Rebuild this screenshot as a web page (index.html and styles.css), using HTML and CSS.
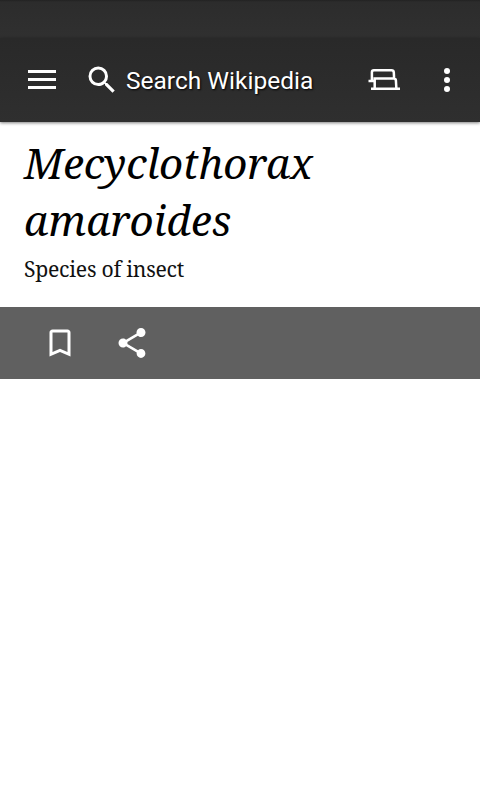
FILE: index.html
```html
<!DOCTYPE html>
<html lang="en">
<head>
<meta charset="utf-8">
<title>Mecyclothorax amaroides</title>
<link rel="stylesheet" href="styles.css">
</head>
<body>
<div class="status"></div>
<header class="toolbar">
<svg class="menu" width="28" height="20" viewBox="0 0 28 20"><path d="M0 1.5h28M0 9.500h28M0 17.500h28" stroke="#fff" stroke-width="3"/></svg>
<svg class="search" width="36" height="36" viewBox="0 0 24 24"><path fill="#fff" d="M15.5 14h-.79l-.28-.27A6.47 6.47 0 0 0 16 9.5 6.5 6.5 0 1 0 9.5 16c1.61 0 3.09-.59 4.23-1.57l.27.28v.79l5 4.99L20.49 19l-4.99-5zm-6 0C7.01 14 5 11.99 5 9.5S7.01 5 9.5 5 14 7.01 14 9.5 11.99 14 9.5 14z"/></svg>
<span class="hint">Search Wikipedia</span>
<svg class="tabs" width="32" height="22" viewBox="0 0 32 22"><path fill="none" stroke="#fff" stroke-width="2.5" d="M.5 12H6.500M3.900 12V3.300Q3.900 1.300 5.900 1.300H23.500Q25.600 1.300 25.800 3.300L26.100 9.300M6.700 20V9.600H25.800Q27.700 9.600 27.900 11.500L28.400 20M3 19.800H32"/></svg>
<svg class="more" width="8" height="26" viewBox="0 0 8 26"><g fill="#fff"><circle cx="4" cy="4" r="3"/><circle cx="4" cy="13" r="3"/><circle cx="4" cy="22" r="3"/></g></svg>
</header>
<main>
<h1><span class="genus">Mecyclothorax</span><br>amaroides</h1>
<p>Species of insect</p>
</main>
<nav class="actions">
<svg width="36" height="36" viewBox="0 0 24 24"><path fill="#fff" d="M17 3H7c-1.100 0-2 .9-2 2v16l7-3 7 3V5c0-1.100-.9-2-2-2zm0 15-5-2.180L7 18V5h10v13z"/></svg>
<svg width="36" height="36" viewBox="0 0 24 24"><path fill="#fff" d="M18 16.080c-.76 0-1.440.3-1.960.77L8.910 12.700c.05-.23.09-.46.09-.7s-.04-.47-.09-.7l7.050-4.110c.54.5 1.250.81 2.040.81 1.660 0 3-1.340 3-3s-1.340-3-3-3-3 1.340-3 3c0 .24.040.47.090.7L8.040 9.810C7.500 9.310 6.790 9 6 9c-1.660 0-3 1.340-3 3s1.340 3 3 3c.79 0 1.500-.31 2.040-.81l7.120 4.160c-.05.21-.08.43-.08.650 0 1.610 1.310 2.920 2.920 2.920s2.920-1.310 2.920-2.920-1.310-2.920-2.920-2.920z"/></svg>
</nav>
</body>
</html>
```
FILE: styles.css
```css
body { margin: 0; background: #fff; color: #000; overflow: hidden; }
.status { height: 38px; background: linear-gradient(#222 0, #2c2c2c 2px, #303030 100%); }
.toolbar { height: 84px; display: flex; align-items: center; background: linear-gradient(#292929, #2f2f2f); box-shadow: 0 1px 3px rgba(0,0,0,.5); }
.menu { margin-left: 28px; }
.search { margin-left: 28px; }
.hint { margin: 1px 0 0 6px; width: 242px; white-space: nowrap; font: 24.5px/28px Roboto, sans-serif; color: #fff; text-shadow: 1px 1px 2px #000; }
.more { margin-left: 43px; }
main { height: 185px; box-sizing: border-box; padding: 12px 0 0 24px; }
h1 { margin: 0; font: italic 42px/57px "Noto Serif", "DejaVu Serif", serif; letter-spacing: .1px; }
.genus { letter-spacing: -.15px; }
p { margin: 7px 0 0; font: 21.2px/27px "Noto Serif", "DejaVu Serif", serif; letter-spacing: -.25px; color: #111; }
.actions { height: 72px; background: #606060; display: flex; align-items: center; gap: 36px; padding-left: 42px; }
```
